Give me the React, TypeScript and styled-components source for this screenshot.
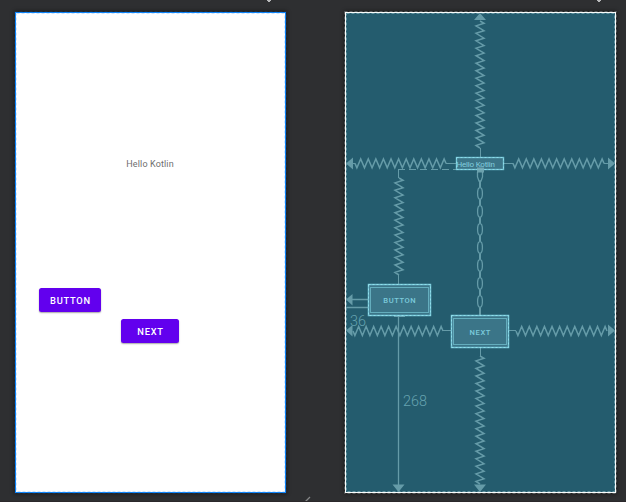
import React from "react";
import styled, { createGlobalStyle } from "styled-components";

const GlobalStyle = createGlobalStyle`
  * { box-sizing: border-box; }
  body { margin: 0; background: #2e2f31; }
`;

const Editor = styled.main`
  position: relative;
  display: flex;
  gap: 59px;
  width: 626px;
  height: 502px;
  padding: 12px 0 0 15px;
  overflow: hidden;
  background: #2e2f31;
  border-bottom: 1px solid #2b282b;
  font-family: Roboto, "Liberation Sans", sans-serif;
`;

const Surface = styled.section<{ $blueprint?: boolean }>`
  position: relative;
  flex: none;
  width: 271px;
  height: 481px;
  background: ${(p) => (p.$blueprint ? "#245c6e" : "#ffffff")};
  border: 1px solid ${(p) => (p.$blueprint ? "#f8fcfc" : "#0f84f8")};
  box-shadow: 0 0 4px 1px rgba(0, 0, 0, 0.45);
`;

const Selection = styled.svg`
  position: absolute;
  left: -2px;
  top: -2px;
  width: 273px;
  height: 483px;
  pointer-events: none;
`;

const Constraints = styled.svg`
  position: absolute;
  left: 0;
  top: 0;
  width: 269px;
  height: 479px;
`;

const Label = styled.span<{ $x: number; $y: number }>`
  position: absolute;
  left: ${(p) => p.$x}px;
  top: ${(p) => p.$y}px;
  font-size: 9px;
  line-height: 12px;
  letter-spacing: 0.13px;
  white-space: nowrap;
  color: #6e6e6e;
`;

const MaterialButton = styled.button<{ $x: number; $y: number; $w: number }>`
  position: absolute;
  left: ${(p) => p.$x}px;
  top: ${(p) => p.$y}px;
  width: ${(p) => p.$w}px;
  height: 24px;
  padding: 1px 0 0 1px;
  border: 0;
  border-radius: 2.5px;
  background: #6200ee;
  box-shadow: 0 1px 1.5px rgba(0, 0, 0, 0.35);
  color: #ffffff;
  font: 500 9.3px/23px Roboto, sans-serif;
  letter-spacing: 0.76px;
  text-align: center;
`;

const Handle = styled.svg<{ $x: number }>`
  position: absolute;
  left: ${(p) => p.$x}px;
  top: 0;
  width: 6px;
  height: 3px;
`;

const Grip = styled.svg`
  position: absolute;
  left: 304px;
  top: 496px;
  width: 8px;
  height: 6px;
`;

const LINE = "#659ba8";

type Spring = { axis: "h" | "v"; at: number; from: number; to: number; teeth: number };

function springPath({ axis, at, from, to, teeth }: Spring) {
  const step = (to - from) / teeth;
  const point = (along: number, across: number) =>
    axis === "h" ? `${along} ${across}` : `${across} ${along}`;
  const amp = axis === "h" ? 4.5 : 4;
  const first = axis === "h" ? 0.25 : 0.3;
  const second = axis === "h" ? 0.75 : 0.65;
  let d = `M${point(from, at)}`;
  for (let i = 0; i < teeth; i++) {
    const s = from + i * step;
    d += ` L${point(s + step * first, at + amp)} L${point(s + step * second, at - amp)}`;
  }
  return `${d} L${point(to, at)}`;
}

const springs: Spring[] = [
  { axis: "h", at: 163.4, from: 355, to: 446, teeth: 12 },
  { axis: "h", at: 163.4, from: 513, to: 604, teeth: 12 },
  { axis: "h", at: 331, from: 353, to: 443, teeth: 12 },
  { axis: "h", at: 331, from: 516, to: 607, teeth: 12 },
  { axis: "v", at: 480, from: 21, to: 148, teeth: 17 },
  { axis: "v", at: 399, from: 178, to: 275, teeth: 13 },
  { axis: "v", at: 480, from: 356, to: 484, teeth: 17 },
];

const widgets = [
  { x: 368, y: 284, w: 63, h: 32, text: "BUTTON", label: 32.5, baseline: 303 },
  { x: 451, y: 315, w: 58, h: 33, text: "NEXT", label: 20.8, baseline: 335 },
];

const links = [193.5, 211.5, 229.5, 247.5, 265.5, 283.5, 301.5];

function Blueprint() {
  return (
    <Constraints viewBox="346 13 269 479" fill="none" stroke={LINE} strokeWidth="1">
      {springs.map((s) => (
        <path key={`${s.axis}-${s.at}-${s.from}`} d={springPath(s)} strokeWidth="1.5" />
      ))}
      <path d="M352 163.5H355M446 163.5H456M504 163.5H513M604 163.5H608M443 330.5H451M509 330.5H516M480.5 148V157M480.5 348V356M398.5 169V178M398.5 275V284" />
      <path d="M352 299.5H368M346 307.5H368M398.5 316V485" strokeWidth="1.3" />
      <path d="M398 169.5H456" strokeDasharray="7 4" />
      <path d="M480 181V187.5M480 199.5V205.5M480 217.5V223.5M480 235.5V241.5M480 253.5V259.5M480 271.5V277.5M480 289.5V295.5M480 307.5V315" strokeWidth="2" />
      <path d="M477.5 172V177L479 181H481L482.5 177V172" strokeWidth="1.3" />
      {links.map((y) => (
        <ellipse key={y} cx="480" cy={y} rx="2.4" ry="5.8" strokeWidth="1.3" />
      ))}
      <g fill={LINE} stroke="none">
        <path d="M346 163.5L353 157.5V169.5Z M346 299.5L352.5 294V305.5Z M346 330.5L352.5 325V336.5Z" />
        <path d="M615 163.5L608 157.5V169.5Z M615 330.5L608 324.5V336.5Z" />
        <path d="M480 13L474 20H486Z M480 492L474 484.5H486Z M398.5 492L392.5 484.5H404.5Z" />
        <path d="M394 316H405V317H394Z" />
      </g>
      <g fill="#66a3b0" stroke="none" fontFamily="Roboto" fontSize="15.4" fontWeight="300">
        <text x="350" y="326" textLength="16" lengthAdjust="spacingAndGlyphs">36</text>
        <text x="403" y="406" textLength="24" lengthAdjust="spacingAndGlyphs">268</text>
      </g>
      <rect x="456.5" y="157.5" width="47" height="12" fill="#3b7588" stroke="#73c1d1" strokeWidth="1.4" />
      <rect x="456.5" y="157.5" width="47" height="12" stroke="#8bdbea" strokeDasharray="2 2" />
      <text x="456.5" y="166.7" fill="#83cede" stroke="none" fontFamily="Roboto" fontSize="8" textLength="38.5">Hello Kotlin</text>
      <path d="M477 167.5H484V172.5H477Z" fill="#78abb7" stroke="none" opacity=".85" />
      {widgets.map((w) => (
        <g key={w.text}>
          <rect x={w.x + 0.5} y={w.y + 0.5} width={w.w - 1} height={w.h - 1} fill="#3b7588" stroke="#73c3d5" strokeWidth="1.5" />
          <rect x={w.x + 0.5} y={w.y + 0.5} width={w.w - 1} height={w.h - 1} stroke="#91deeb" strokeDasharray="2 2" />
          <rect x={w.x + 2.5} y={w.y + 3.5} width={w.w - 5} height={w.h - 7} stroke="#64adbd" />
          <text
            x={w.x + (w.w - w.label) / 2}
            y={w.baseline}
            textLength={w.label}
            fill="#7ccbdb"
            stroke="none"
            fontFamily="Roboto"
            fontWeight="500"
            fontSize="7.6"
          >
            {w.text}
          </text>
        </g>
      ))}
    </Constraints>
  );
}

function DashedOutline({ outer, inner }: { outer: string; inner: string }) {
  return (
    <Selection viewBox="0 0 273 483" fill="none">
      <rect x="0.5" y="0.5" width="272" height="482" stroke={outer} strokeDasharray="3 2" />
      <rect x="2.5" y="2.5" width="268" height="478" stroke={inner} strokeDasharray="3 2" />
    </Selection>
  );
}

export default function App() {
  return (
    <>
      <GlobalStyle />
      <Editor>
        <Surface>
          <Label $x={110.3} $y={145}>Hello Kotlin</Label>
          <MaterialButton $x={23} $y={275} $w={62}>BUTTON</MaterialButton>
          <MaterialButton $x={105} $y={306} $w={58}>NEXT</MaterialButton>
          <DashedOutline outer="#252e3a" inner="#cfe5fc" />
        </Surface>
        <Surface $blueprint>
          <Blueprint />
          <DashedOutline outer="#575c5d" inner="#6295a2" />
        </Surface>
        {[266, 596].map((x) => (
          <Handle key={x} $x={x} viewBox="0 0 6 3">
            <path d="M1 0H5V1H4V2H2V1H1Z" fill="#b9babb" />
          </Handle>
        ))}
        <Grip viewBox="0 0 8 6">
          <path d="M1 6L6 1" stroke="#858687" strokeWidth="1.3" />
        </Grip>
      </Editor>
    </>
  );
}
